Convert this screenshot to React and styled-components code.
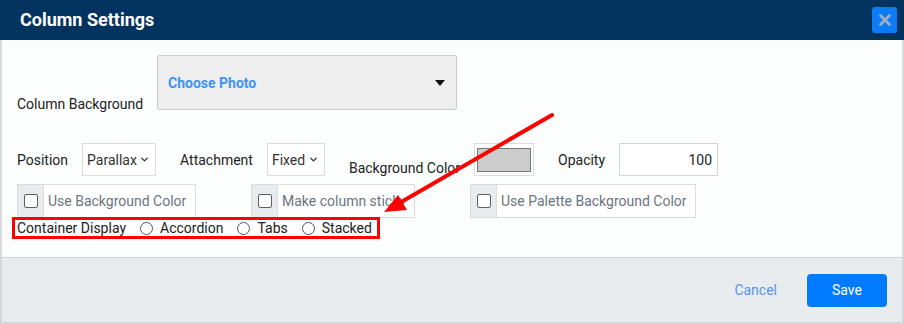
import React from "react";
import styled, { createGlobalStyle } from "styled-components";
import { X, ChevronDown } from "lucide-react";

const GlobalStyle = createGlobalStyle`
  html, body {
    margin: 0;
    padding: 0;
    background: #fff;
  }
  body {
    font-family: Roboto, "Liberation Sans", sans-serif;
    font-size: 14px;
    color: #212529;
  }
  * {
    box-sizing: border-box;
  }
`;

const Modal = styled.div`
  position: relative;
  width: 904px;
  height: 324px;
  display: flex;
  flex-direction: column;
`;

const Header = styled.div`
  height: 40px;
  flex: none;
  background: #03335f;
  display: flex;
  align-items: center;
  justify-content: space-between;
  padding: 0 7px 0 20px;
`;

const Title = styled.h2`
  margin: 0;
  color: #fff;
  font-size: 18px;
  font-weight: 700;
  line-height: 20px;
`;

const CloseButton = styled.button`
  width: 25px;
  height: 26px;
  border: none;
  border-radius: 3px;
  background: #0b7cf6;
  color: #a3aebc;
  display: flex;
  align-items: center;
  justify-content: center;
  padding: 0;
`;

const Body = styled.div`
  height: 217px;
  flex: none;
  background: #fcfdfd;
  border-left: 2px solid #d5dae0;
  border-right: 2px solid #d5dae0;
  padding: 15px 0 0 15px;
`;

const Row = styled.div`
  display: flex;
  align-items: ${(p) => p.$align || "center"};
  gap: ${(p) => p.$gap || 0}px;
  margin-top: ${(p) => p.$top || 0}px;
`;

const Label = styled.span`
  line-height: 20px;
  color: #222;
  white-space: nowrap;
  width: ${(p) => (p.$width ? `${p.$width}px` : "auto")};
  margin-top: ${(p) => p.$shift || 0}px;
  margin-bottom: ${(p) => (p.$drop || 0) - (p.$shift || 0)}px;
`;

const PhotoSelect = styled.div`
  width: 300px;
  height: 55px;
  background: #eeeeee;
  border: 1px solid #cccccc;
  border-radius: 2px;
  display: flex;
  align-items: center;
  justify-content: space-between;
  padding: 0 11px 0 10px;
  font-weight: 700;
  color: #3d94f4;
`;

const Caret = styled.span`
  width: 0;
  height: 0;
  border-left: 5px solid transparent;
  border-right: 5px solid transparent;
  border-top: 6px solid #111;
`;

const Field = styled.div`
  display: flex;
  align-items: center;
  gap: 14px;
`;

const SmallSelect = styled.div`
  width: ${(p) => p.$width}px;
  height: 33px;
  background: #fff;
  border: 1px solid #dcdcdc;
  display: flex;
  align-items: center;
  justify-content: space-between;
  padding: 0 5px 0 4px;
  color: #333;
  font-size: 14px;
`;

const Swatch = styled.div`
  width: 60px;
  height: 33px;
  background: #fff;
  border: 1px solid #dcdcdc;
  display: flex;
  align-items: center;
  justify-content: center;
`;

const SwatchFill = styled.div`
  width: 54px;
  height: 24px;
  background: ${(p) => p.$color};
  border: 1px solid #777;
`;

const NumberBox = styled.div`
  width: 99px;
  height: 33px;
  background: #fff;
  border: 1px solid #d6d6d6;
  display: flex;
  align-items: center;
  justify-content: flex-end;
  padding-right: 5px;
  color: #222;
`;

const CheckGroup = styled.div`
  width: ${(p) => p.$width}px;
  height: 34px;
  display: flex;
  border: 1px solid #dcdcdc;
  background: #fff;
`;

const Addon = styled.div`
  width: 26px;
  flex: none;
  background: #e9ecef;
  border-right: 1px solid #dcdcdc;
  display: flex;
  align-items: center;
  justify-content: center;
`;

const Box = styled.span`
  width: 14px;
  height: 14px;
  border: 1px solid #5f5f5f;
  border-radius: 2px;
  background: #fff;
`;

const CheckText = styled.span`
  display: flex;
  align-items: center;
  padding-left: 4px;
  color: #6c757d;
  white-space: nowrap;
  overflow: hidden;
`;

const Highlight = styled.div`
  display: inline-flex;
  align-items: center;
  height: 22px;
  margin: -1px 0 0 -5px;
  border: 3px solid #ff0000;
  padding: 0 5px 0 2px;
  gap: 14px;
`;

const RadioOption = styled.label`
  display: flex;
  align-items: center;
  gap: 7px;
  color: #222;
  line-height: 16px;
`;

const Radio = styled.span`
  width: 13px;
  height: 13px;
  border: 1px solid #555;
  border-radius: 50%;
  background: #fff;
`;

const Footer = styled.div`
  height: 67px;
  flex: none;
  background: #e9ecef;
  border: 2px solid #d3d8de;
  border-top: 1px solid #d0d5db;
  display: flex;
  align-items: center;
  justify-content: flex-end;
  gap: 30px;
  padding-right: 15px;
`;

const CancelLink = styled.span`
  color: #5196f0;
  font-size: 14px;
`;

const SaveButton = styled.button`
  width: 80px;
  height: 33px;
  border: none;
  border-radius: 4px;
  background: #007bff;
  color: #fff;
  font-family: inherit;
  font-size: 14px;
`;

const Overlay = styled.svg`
  position: absolute;
  left: 0;
  top: 0;
  pointer-events: none;
`;

const checks = [
  { text: "Use Background Color", width: 179 },
  { text: "Make column sticky", width: 164 },
  { text: "Use Palette Background Color", width: 226 },
];

export default function App() {
  return (
    <>
      <GlobalStyle />
      <Modal>
        <Header>
          <Title>Column Settings</Title>
          <CloseButton>
            <X size={18} strokeWidth={3.6} />
          </CloseButton>
        </Header>

        <Body>
          <Row $align="flex-end">
            <Label $width={140} $drop={-4}>Column Background</Label>
            <PhotoSelect>
              Choose Photo
              <Caret />
            </PhotoSelect>
          </Row>

          <Row $top={33} $gap={24}>
            <Field>
              <Label>Position</Label>
              <SmallSelect $width={74}>
                Parallax <ChevronDown size={11} strokeWidth={3} />
              </SmallSelect>
            </Field>
            <Field>
              <Label>Attachment</Label>
              <SmallSelect $width={58}>
                Fixed <ChevronDown size={11} strokeWidth={3} />
              </SmallSelect>
            </Field>
            <Field>
              <Label $shift={8}>Background Color</Label>
              <Swatch>
                <SwatchFill $color="#cccccc" />
              </Swatch>
            </Field>
            <Field>
              <Label>Opacity</Label>
              <NumberBox>100</NumberBox>
            </Field>
          </Row>

          <Row $top={8} $gap={55}>
            {checks.map((c) => (
              <CheckGroup key={c.text} $width={c.width}>
                <Addon>
                  <Box />
                </Addon>
                <CheckText>{c.text}</CheckText>
              </CheckGroup>
            ))}
          </Row>

          <Highlight>
            <Label>Container Display</Label>
            {["Accordion", "Tabs", "Stacked"].map((o) => (
              <RadioOption key={o}>
                <Radio />
                {o}
              </RadioOption>
            ))}
          </Highlight>
        </Body>

        <Footer>
          <CancelLink>Cancel</CancelLink>
          <SaveButton>Save</SaveButton>
        </Footer>

        <Overlay width="904" height="324">
          <line x1="552" y1="115" x2="396" y2="205" stroke="#ff0000" strokeWidth="4" strokeLinecap="round" />
          <polygon points="384,212 398,195 407,210" fill="#ff0000" />
        </Overlay>
      </Modal>
    </>
  );
}
